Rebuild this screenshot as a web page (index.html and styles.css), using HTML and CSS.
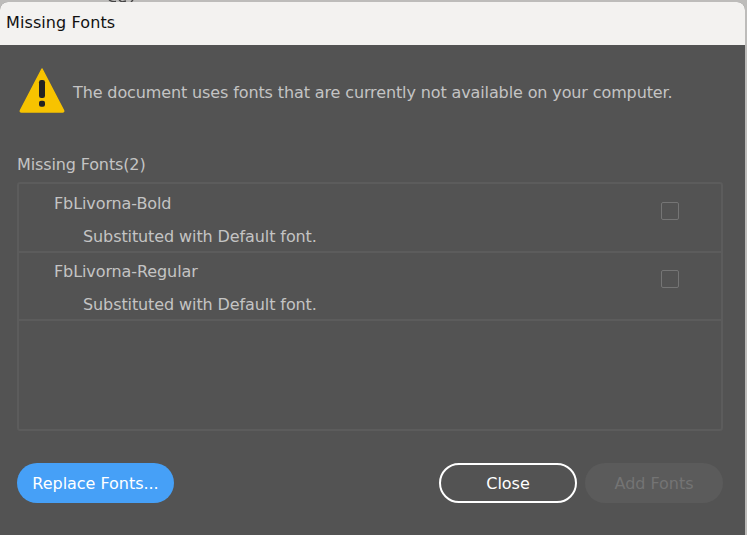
FILE: index.html
```html
<!DOCTYPE html>
<html lang="en">
<head>
<meta charset="utf-8">
<title>Missing Fonts</title>
<link rel="stylesheet" href="styles.css">
</head>
<body>
<svg class="behind" width="30" height="2" viewBox="0 0 30 2" aria-hidden="true">
  <path d="M1 0 Q4 2 8 1.5 M11 0 L14 2 L18 1 M23 2 L25 0" fill="none" stroke="#444" stroke-width="1.4"/>
</svg>
<div class="window">
  <header class="titlebar">Missing Fonts</header>
  <main class="dialog">
    <div class="notice">
      <svg class="warn" width="48" height="48" viewBox="0 0 48 48" aria-hidden="true">
        <path d="M24 2 L45.6 43.6 Q46 45 44.6 45 L3.4 45 Q2 45 2.4 43.6 Z" fill="#f7c300" stroke="#f7c300" stroke-width="1.5" stroke-linejoin="round"/>
        <rect x="21" y="13" width="6" height="18" rx="2.2" fill="#222"/>
        <rect x="21" y="33.8" width="6" height="6" rx="2" fill="#222"/>
      </svg>
      <p class="notice-text">The document uses fonts that are currently not available on your computer.</p>
    </div>
    <h2 class="list-title">Missing Fonts(2)</h2>
    <div class="list">
      <div class="row">
        <div class="row-text">
          <div class="font-name">FbLivorna-Bold</div>
          <div class="font-sub">Substituted with Default font.</div>
        </div>
        <span class="check"></span>
      </div>
      <div class="row">
        <div class="row-text">
          <div class="font-name">FbLivorna-Regular</div>
          <div class="font-sub">Substituted with Default font.</div>
        </div>
        <span class="check"></span>
      </div>
    </div>
    <div class="actions">
      <button class="btn btn-primary">Replace Fonts...</button>
      <div class="actions-right">
        <button class="btn btn-outline">Close</button>
        <button class="btn btn-disabled">Add Fonts</button>
      </div>
    </div>
  </main>
</div>
</body>
</html>
```
FILE: styles.css
```css
* { box-sizing: border-box; }
html, body { margin: 0; height: 100%; }
body {
  background: #bdbcba;
  font-family: "DejaVu Sans", sans-serif;
  font-size: 16px;
  overflow: hidden;
  padding: 2px 2px 0 0;
}
.behind { position: absolute; top: 0; left: 108px; }
.window {
  height: 533px;
  width: 745px;
  background: #535353;
  border-top-left-radius: 8px;
  border-top-right-radius: 8px;
  overflow: hidden;
}
.titlebar {
  height: 43px;
  background: #f3f2f0;
  color: #111;
  padding: 10px 0 0 6px;
  font-size: 16px;
  line-height: 22px;
  letter-spacing: 0.1px;
}
.dialog { padding: 21px 22px 0 17px; }
.notice { display: flex; align-items: center; height: 50px; margin-left: 1px; }
.warn { flex: none; margin-right: 7px; }
.notice-text {
  margin: 0;
  color: #c4c4c4;
  line-height: 20px;
  letter-spacing: -0.12px;
  white-space: nowrap;
  position: relative;
  top: 2px;
}
.list-title {
  margin: 38px 0 6px;
  font-weight: 400;
  font-size: 16px;
  line-height: 22px;
  color: #c4c4c4;
  letter-spacing: -0.13px;
}
.list {
  height: 249px;
  padding-top: 1px;
  border: 2px solid #5c5c5c;
  border-radius: 3px;
}
.row {
  height: 68px;
  border-bottom: 2px solid #5c5c5c;
  display: flex;
  justify-content: space-between;
  color: #c4c4c4;
  letter-spacing: -0.1px;
}
.row-text { padding: 8px 0 0 35px; }
.font-name { line-height: 22px; }
.font-sub { line-height: 22px; margin: 11px 0 0 29px; }
.check {
  width: 18px;
  height: 18px;
  margin: 17px 42px 0 0;
  border: 1.5px solid #757575;
  border-radius: 2px;
}
.actions {
  display: flex;
  justify-content: space-between;
  margin-top: 32px;
}
.actions-right { display: flex; gap: 8px; }
.btn {
  height: 40px;
  border-radius: 20px;
  font-family: inherit;
  font-size: 16px;
  letter-spacing: -0.03px;
  padding: 0;
  border: 2px solid transparent;
}
.btn-primary { width: 157px; background: #46a0f7; color: #fff; }
.btn-outline { width: 138px; background: transparent; border-color: #fff; color: #fff; }
.btn-disabled { width: 138px; background: #5b5b5b; color: #747474; }
```
